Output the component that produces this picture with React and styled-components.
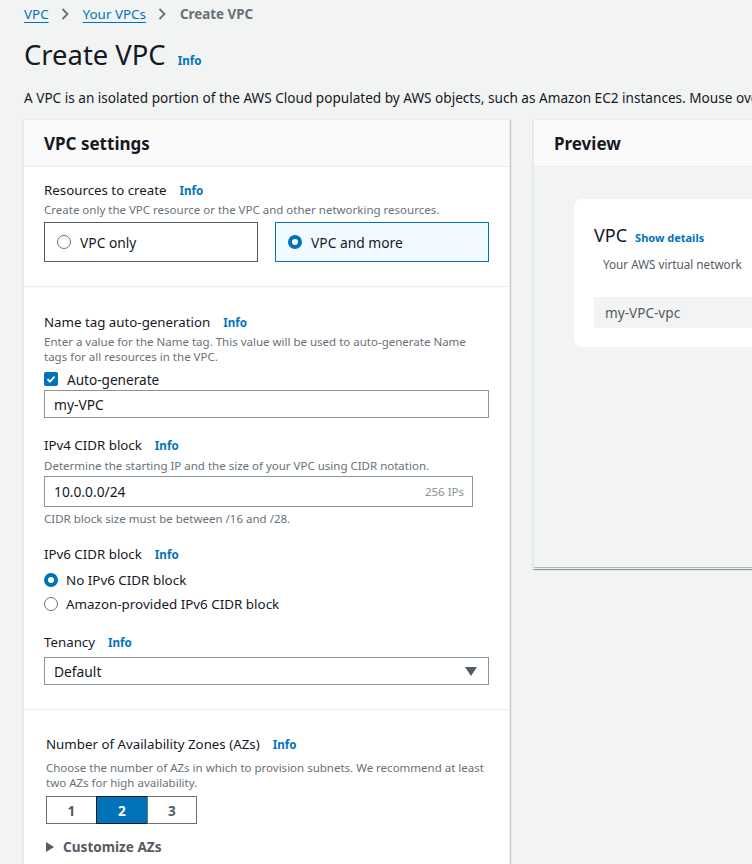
import React from 'react';
import styled, { createGlobalStyle } from 'styled-components';

const GlobalStyle = createGlobalStyle`
  html, body {
    margin: 0;
    padding: 0;
    background: #f2f3f3;
    overflow: hidden;
  }
  body {
    font-family: "Noto Sans", "Open Sans", sans-serif;
    color: #16191f;
  }
  * { box-sizing: border-box; }
`;

const Page = styled.div`
  width: 1100px;
  padding: 4px 0 0 24px;
`;

const Breadcrumbs = styled.nav`
  display: flex;
  align-items: center;
  gap: 12px;
  font-size: 13.4px;
  line-height: 20px;
`;

const Crumb = styled.a`
  color: #0073bb;
  text-decoration: underline;
  text-underline-offset: 3px;
`;

const CrumbCurrent = styled.span`
  color: #687078;
  font-weight: 700;
`;

const TitleRow = styled.div`
  display: flex;
  align-items: baseline;
  gap: 12px;
  margin-top: 14px;
`;

const Title = styled.h1`
  margin: 0;
  font-size: 27.4px;
  line-height: 34px;
  font-weight: 400;
`;

const Info = styled.a`
  color: #0073bb;
  font-size: ${p => p.$size ?? 11.6}px;
  font-weight: 700;
  margin-left: ${p => p.$gap ?? 13}px;
`;

const Intro = styled.p`
  margin: 16px 0 0;
  font-size: 13.6px;
  line-height: 20px;
  white-space: nowrap;
`;

const Columns = styled.div`
  display: grid;
  grid-template-columns: 487px 400px;
  gap: 23px;
  align-items: start;
  margin-top: 11px;
  margin-left: -1px;
`;

const Panel = styled.section`
  background: #fff;
  border: 1px solid #eaeded;
  box-shadow: 0 1px 1px 0 rgba(0, 28, 36, 0.3), 1px 1px 1px 0 rgba(0, 28, 36, 0.15);
`;

const PanelHeader = styled.header`
  height: 47px;
  display: flex;
  align-items: center;
  padding: 0 20px;
  background: #fafafa;
  border-bottom: 1px solid #eaeded;
  font-size: 17px;
  font-weight: 700;
`;

const Section = styled.div`
  display: flex;
  flex-direction: column;
  padding: ${p => p.$top}px ${p => p.$right ?? 20}px ${p => p.$bottom}px ${p => p.$left ?? 20}px;
  border-bottom: ${p => (p.$last ? 'none' : '1px solid #eaeded')};
`;

const Label = styled.div`
  font-size: 13.3px;
  line-height: 20px;
  margin-top: ${p => p.$mt || 0}px;
`;

const Hint = styled.div`
  font-size: 11.5px;
  line-height: 15px;
  color: #687078;
  margin-top: ${p => p.$mt || 0}px;
`;

const Tiles = styled.div`
  display: grid;
  grid-template-columns: 214px 214px;
  gap: 17px;
  margin-top: 5px;
`;

const Tile = styled.div`
  height: 40px;
  display: flex;
  align-items: center;
  gap: 9px;
  padding-left: 12px;
  font-size: 13.8px;
  border: 1px solid ${p => (p.$on ? '#0073bb' : '#545b64')};
  background: ${p => (p.$on ? '#f1faff' : '#fff')};
`;

const Radio = styled.span`
  width: 14px;
  height: 14px;
  border-radius: 50%;
  flex: none;
  background: #fff;
  border: ${p => (p.$on ? '4px solid #0073bb' : '1px solid #687078')};
`;

const OptionRow = styled.label`
  display: flex;
  align-items: center;
  gap: 8px;
  height: 24px;
  font-size: 13.4px;
  margin-top: ${p => p.$mt || 0}px;
`;

const CheckRow = styled.label`
  display: flex;
  align-items: center;
  gap: 9px;
  height: 20px;
  font-size: 13.6px;
  margin-top: 5px;
`;

const Check = styled.span`
  width: 14px;
  height: 14px;
  border-radius: 2px;
  background: #0073bb;
  display: flex;
  align-items: center;
  justify-content: center;
`;

const Field = styled.div`
  display: flex;
  align-items: center;
  justify-content: space-between;
  width: ${p => p.$w || 445}px;
  height: ${p => p.$h || 28}px;
  margin-top: ${p => p.$mt || 0}px;
  padding: 0 8px 0 9px;
  border: 1px solid #879596;
  background: #fff;
  font-size: 13.8px;
`;

const FieldSuffix = styled.span`
  font-size: 11.5px;
  color: #879596;
`;

const Caret = styled.span`
  width: 0;
  height: 0;
  border-left: 6px solid transparent;
  border-right: 6px solid transparent;
  border-top: 9px solid #545b64;
  margin-right: 3px;
`;

const Segments = styled.div`
  display: flex;
  margin-top: 6px;
`;

const Segment = styled.button`
  width: ${p => p.$w}px;
  height: 28px;
  font-family: inherit;
  font-size: 13.6px;
  font-weight: 700;
  color: ${p => (p.$on ? '#fff' : '#545b64')};
  background: ${p => (p.$on ? '#0073bb' : '#fff')};
  border: 1px solid ${p => (p.$on ? '#16191f' : '#687078')};
  margin-left: ${p => (p.$first ? 0 : -1)}px;
  padding: 0;
`;

const Expander = styled.div`
  display: flex;
  align-items: center;
  gap: 9px;
  margin-top: 13px;
  font-size: 13.6px;
  font-weight: 700;
  color: #545b64;
`;

const Arrow = styled.span`
  width: 0;
  height: 0;
  border-top: 5px solid transparent;
  border-bottom: 5px solid transparent;
  border-left: 8px solid #545b64;
`;

const PreviewBody = styled.div`
  height: 401px;
  background: #f2f3f3;
  padding: 32px 0 0 40px;
  border-bottom: 1px solid #aab7b8;
`;

const PreviewCard = styled.div`
  width: 320px;
  height: 148px;
  background: #fff;
  border-radius: 8px;
  padding: 24px 20px 0;
`;

const CardTitle = styled.div`
  display: flex;
  align-items: baseline;
  font-size: 18px;
  line-height: 24px;
`;

const CardSub = styled.div`
  font-size: 11.7px;
  line-height: 16px;
  color: #545b64;
  margin: 6px 0 0 9px;
`;

const CardValue = styled.div`
  height: 31px;
  margin-top: 25px;
  padding-left: 11px;
  display: flex;
  align-items: center;
  background: #f2f3f3;
  font-size: 13.6px;
  color: #545b64;
`;

const Chevron = () => (
  <svg width="8" height="12" viewBox="0 0 8 12" style={{ marginRight: 2 }}>
    <path d="M1.5 1l5 5-5 5" fill="none" stroke="#687078" strokeWidth="1.8" />
  </svg>
);

export default function App() {
  return (
    <>
      <GlobalStyle />
      <Page>
        <Breadcrumbs>
          <Crumb>VPC</Crumb>
          <Chevron />
          <Crumb>Your VPCs</Crumb>
          <Chevron />
          <CrumbCurrent>Create VPC</CrumbCurrent>
        </Breadcrumbs>
        <TitleRow>
          <Title>Create VPC</Title>
          <Info $gap={0}>Info</Info>
        </TitleRow>
        <Intro>
          A VPC is an isolated portion of the AWS Cloud populated by AWS objects, such as Amazon EC2 instances. Mouse over a resource to highlight the related resources.
        </Intro>
        <Columns>
          <Panel>
            <PanelHeader>VPC settings</PanelHeader>
            <Section $top={13} $bottom={24}>
              <Label>Resources to create<Info>Info</Info></Label>
              <Hint $mt={1}>Create only the VPC resource or the VPC and other networking resources.</Hint>
              <Tiles>
                <Tile><Radio />VPC only</Tile>
                <Tile $on><Radio $on />VPC and more</Tile>
              </Tiles>
            </Section>
            <Section $top={25} $bottom={24}>
              <Label>Name tag auto-generation<Info>Info</Info></Label>
              <Hint $mt={1}>
                Enter a value for the Name tag. This value will be used to auto-generate Name tags for all resources in the VPC.
              </Hint>
              <CheckRow>
                <Check>
                  <svg width="10" height="10" viewBox="0 0 10 10">
                    <path d="M1.5 5.2l2.4 2.4 4.6-5" fill="none" stroke="#fff" strokeWidth="1.8" />
                  </svg>
                </Check>
                Auto-generate
              </CheckRow>
              <Field $mt={1}>my-VPC</Field>
              <Label $mt={17}>IPv4 CIDR block<Info>Info</Info></Label>
              <Hint $mt={2}>Determine the starting IP and the size of your VPC using CIDR notation.</Hint>
              <Field $mt={3} $w={429} $h={31}>
                10.0.0.0/24
                <FieldSuffix>256 IPs</FieldSuffix>
              </Field>
              <Hint $mt={4}>CIDR block size must be between /16 and /28.</Hint>
              <Label $mt={18}>IPv6 CIDR block<Info>Info</Info></Label>
              <OptionRow $mt={3}><Radio $on />No IPv6 CIDR block</OptionRow>
              <OptionRow><Radio />Amazon-provided IPv6 CIDR block</OptionRow>
              <Label $mt={16}>Tenancy<Info>Info</Info></Label>
              <Field $mt={4}>
                Default
                <Caret />
              </Field>
            </Section>
            <Section $top={24} $bottom={40} $left={22} $right={16} $last>
              <Label>Number of Availability Zones (AZs)<Info>Info</Info></Label>
              <Hint $mt={5}>
                Choose the number of AZs in which to provision subnets. We recommend at least two AZs for high availability.
              </Hint>
              <Segments>
                <Segment $w={51} $first>1</Segment>
                <Segment $w={52} $on>2</Segment>
                <Segment $w={50}>3</Segment>
              </Segments>
              <Expander><Arrow />Customize AZs</Expander>
            </Section>
          </Panel>
          <Panel>
            <PanelHeader>Preview</PanelHeader>
            <PreviewBody>
              <PreviewCard>
                <CardTitle>VPC<Info $gap={8} $size={11}>Show details</Info></CardTitle>
                <CardSub>Your AWS virtual network</CardSub>
                <CardValue>my-VPC-vpc</CardValue>
              </PreviewCard>
            </PreviewBody>
          </Panel>
        </Columns>
      </Page>
    </>
  );
}
